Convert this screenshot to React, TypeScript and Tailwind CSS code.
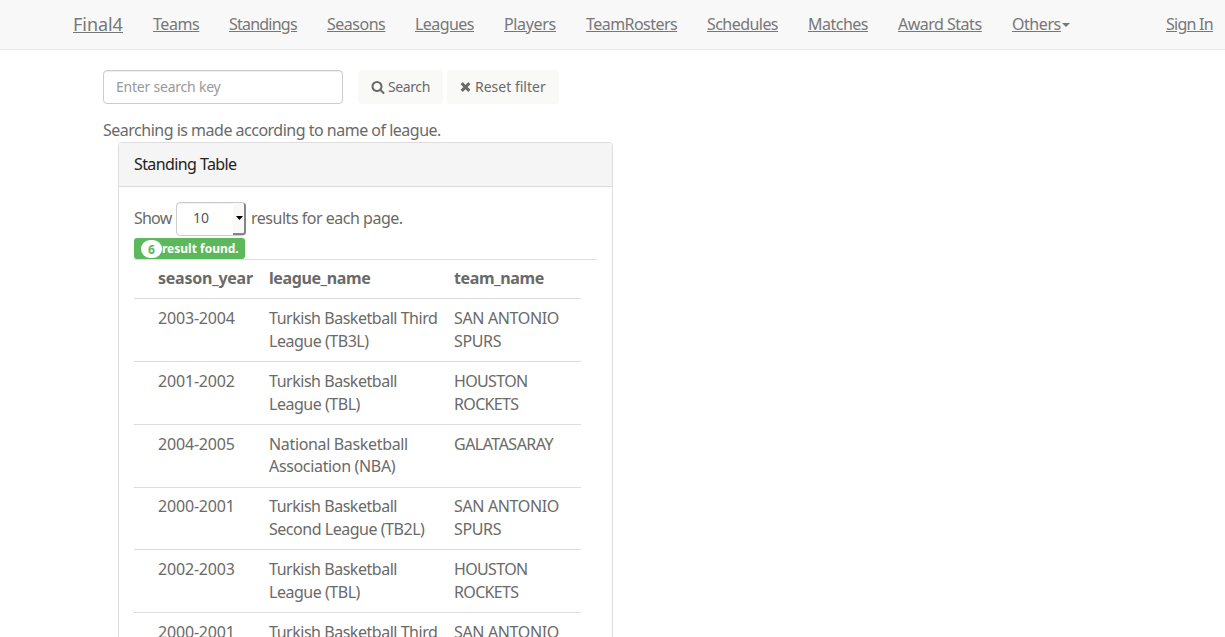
import React from 'react';

const links = [
  { label: 'Teams', box: 'w-[46px] tracking-[-0.45px]' },
  { label: 'Standings', box: 'w-[68px] tracking-[-0.78px]' },
  { label: 'Seasons', box: 'w-[58px] tracking-[-0.5px]' },
  { label: 'Leagues', box: 'w-[59px] tracking-[-0.55px]' },
  { label: 'Players', box: 'w-[52px] tracking-[-0.35px]' },
  { label: 'TeamRosters', box: 'w-[91px] tracking-[-0.55px]' },
  { label: 'Schedules', box: 'w-[71px] tracking-[-0.55px]' },
  { label: 'Matches', box: 'w-[60px] tracking-[-0.5px]' },
  { label: 'Award Stats', box: 'w-[84px] tracking-[-0.5px]' },
];

const rows = [
  { year: '2003-2004', league: ['Turkish Basketball Third', 'League (TB3L)'], team: ['SAN ANTONIO', 'SPURS'] },
  { year: '2001-2002', league: ['Turkish Basketball', 'League (TBL)'], team: ['HOUSTON', 'ROCKETS'] },
  { year: '2004-2005', league: ['National Basketball', 'Association (NBA)'], team: ['GALATASARAY', ''] },
  { year: '2000-2001', league: ['Turkish Basketball', 'Second League (TB2L)'], team: ['SAN ANTONIO', 'SPURS'] },
  { year: '2002-2003', league: ['Turkish Basketball', 'League (TBL)'], team: ['HOUSTON', 'ROCKETS'] },
  { year: '2000-2001', league: ['Turkish Basketball Third', 'League (TB3L)'], team: ['SAN ANTONIO', 'SPURS'] },
];

const leagueTracking = (name: string) =>
  name.startsWith('National') ? 'tracking-[-0.34px]' : 'tracking-[-0.47px]';

const teamTracking = (name: string) =>
  name === 'HOUSTON' ? 'tracking-[-0.65px]' : name === 'GALATASARAY' ? 'tracking-[-0.5px]' : 'tracking-[-0.35px]';

function SearchIcon() {
  return (
    <svg viewBox="0 0 1792 1792" className="h-[14px] w-[14px] shrink-0 fill-current">
      <path d="M1216 832q0-185-131.5-316.5t-316.5-131.5-316.5 131.5-131.5 316.5 131.5 316.5 316.5 131.5 316.5-131.5 131.5-316.5zm512 832q0 52-38 90t-90 38q-54 0-90-38l-343-342q-179 124-399 124-143 0-273.5-55.5t-225-150-150-225-55.5-273.5 55.5-273.5 150-225 225-150 273.5-55.5 273.5 55.5 225 150 150 225 55.5 273.5q0 220-124 399l343 343q37 37 37 90z" />
    </svg>
  );
}

function TimesIcon() {
  return (
    <svg viewBox="192 64 1408 1792" className="h-[14px] w-[11px] shrink-0 fill-current">
      <path d="M1490 1322q0 40-28 68l-136 136q-28 28-68 28t-68-28l-294-294-294 294q-28 28-68 28t-68-28l-136-136q-28-28-28-68t28-68l294-294-294-294q-28-28-28-68t28-68l136-136q28-28 68-28t68 28l294 294 294-294q28-28 68-28t68 28l136 136q28 28 28 68t-28 68l-294 294 294 294q28 28 28 68z" />
    </svg>
  );
}

export default function App() {
  return (
    <div className="h-[637px] overflow-hidden bg-white font-['Noto_Sans','Open_Sans',sans-serif] text-[16px] leading-[22.857px] tracking-[-0.3px] text-[#6a6a67]">
      <nav className="flex h-[50px] items-center whitespace-nowrap border-b border-[#e7e7e7] bg-[#f8f8f8] pr-3 pl-[73px] text-[#777] underline">
        <a className="mr-[30px] w-[50px] text-[18px] tracking-[-0.05px]">Final4</a>
        {links.map((l) => (
          <a key={l.label} className={`mr-[30px] ${l.box}`}>{l.label}</a>
        ))}
        <a className="w-[48px] tracking-[-0.45px]">Others</a>
        <svg viewBox="0 0 8 4" className="ml-[2px] h-1 w-2 fill-current"><path d="M0 0h8L4 4z" /></svg>
        <a className="ml-auto w-[47px] tracking-[-0.75px]">Sign In</a>
      </nav>

      <main className="pt-5 pl-[103px]">
        <div className="flex h-[34px] text-[14px] tracking-[0px]">
          <input
            placeholder="Enter search key"
            className="h-[34px] w-[240px] rounded-[4px] border border-[#ccc] px-3 pb-[2px] tracking-[-0.22px] shadow-[inset_0_1px_1px_rgba(0,0,0,0.075)] placeholder:text-[#999]"
          />
          <button className="ml-[15px] flex h-[34px] w-[85px] items-center gap-[3px] rounded-[4px] bg-[#f9f9f8] pl-[13px] whitespace-nowrap">
            <SearchIcon />
            <span className="tracking-[-0.4px]">Search</span>
          </button>
          <button className="ml-1 flex h-[34px] w-[112px] items-center gap-1 rounded-[4px] bg-[#f9f9f8] pl-[13px] whitespace-nowrap">
            <TimesIcon />
            <span>Reset filter</span>
          </button>
        </div>
        <p className="mt-[15px] h-[23px] whitespace-nowrap tracking-[-0.5px]">Searching is made according to name of league.</p>

        <section className="ml-[15px] h-[600px] w-[495px] rounded-[4px] border border-[#ddd]">
          <header className="flex h-[44px] items-center rounded-t-[3px] border-b border-[#ddd] bg-[#f5f5f5] pl-[15px] tracking-[-0.6px] text-[#222]">
            Standing Table
          </header>
          <div className="px-[15px] pt-[15px]">
            <div className="flex h-[34px] items-center whitespace-nowrap">
              <span className="w-[42px] pb-[2px] tracking-[-0.8px]">Show</span>
              <span className="flex h-[34px] w-[70px] items-center justify-between rounded-[4px] border border-[#ccc] pl-4 text-[14px] tracking-normal text-[#555] shadow-[inset_0_1px_1px_rgba(0,0,0,0.075)]">
                <span className="pb-[2px]">10</span>
                <span className="-mr-px flex h-[32px] w-[13px] items-center justify-end rounded-r-[3px] border-r-2 border-b-2 border-[#858585] bg-[#f9f9f8] pr-px">
                  <svg viewBox="0 0 7 4" className="h-[4px] w-[7px] fill-black"><path d="M0 0h7L3.5 4z" /></svg>
                </span>
              </span>
              <span className="ml-[5px] pb-[2px] tracking-[-0.48px]">results for each page.</span>
            </div>
            <div className="mt-[2px] flex h-[21px] w-[111px] items-center rounded-[3px] bg-[#5cb85c] pl-[7px] text-[12px] leading-none font-bold tracking-normal whitespace-nowrap text-white">
              <span className="mt-px flex h-[18px] w-[21px] items-center justify-center rounded-[10px] bg-white pt-px text-[#5cb85c]">6</span>
              <span>result found.</span>
            </div>
            <div className="border-t border-[#ddd]">
              <div className="flex h-[38.42px] w-[447px] items-start pt-[7px] pl-6 font-bold whitespace-nowrap">
                <span className="w-[111px] tracking-[-0.25px]">season_year</span>
                <span className="w-[185px] tracking-[-0.4px]">league_name</span>
                <span className="tracking-[-0.4px]">team_name</span>
              </div>
              {rows.map((r, i) => (
                <div key={i} className="flex h-[62.71px] w-[447px] items-start border-t border-[#ddd] pt-[7.7px] pl-6 whitespace-nowrap">
                  <span className="w-[111px] tracking-[-0.18px]">{r.year}</span>
                  <span className={`w-[185px] ${leagueTracking(r.league[0])}`}>{r.league[0]}<br />{r.league[1]}</span>
                  <span className={teamTracking(r.team[0])}>{r.team[0]}<br />{r.team[1]}</span>
                </div>
              ))}
            </div>
          </div>
        </section>
      </main>
    </div>
  );
}
